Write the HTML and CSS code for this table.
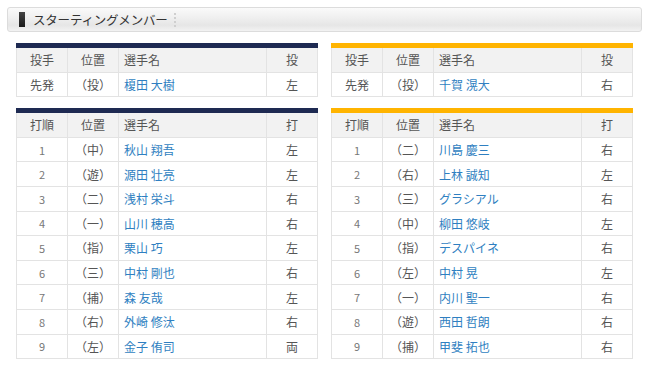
FILE: index.html
```html
<!DOCTYPE html>
<html lang="ja">
<head>
<meta charset="utf-8">
<link rel="stylesheet" href="styles.css">
</head>
<body>
<div class="page">
  <div class="title-bar">
    <span class="title-mark"></span>
    <span class="title-text">スターティングメンバー</span>
    <span class="title-sep"></span>
  </div>
  <div class="teams">
    <div class="team">
      <table class="lineup navy">
        <colgroup><col class="c-s"><col class="c-s"><col class="c-l"><col class="c-s"></colgroup>
        <tr class="head"><th>投手</th><th>位置</th><th class="name">選手名</th><th>投</th></tr>
        <tr><td>先発</td><td>（投）</td><td class="name"><a>榎田 大樹</a></td><td>左</td></tr>
      </table>
      <table class="lineup navy">
        <colgroup><col class="c-s"><col class="c-s"><col class="c-l"><col class="c-s"></colgroup>
        <tr class="head"><th>打順</th><th>位置</th><th class="name">選手名</th><th>打</th></tr>
        <tr><td class="num">1</td><td>（中）</td><td class="name"><a>秋山 翔吾</a></td><td>左</td></tr>
        <tr><td class="num">2</td><td>（遊）</td><td class="name"><a>源田 壮亮</a></td><td>左</td></tr>
        <tr><td class="num">3</td><td>（二）</td><td class="name"><a>浅村 栄斗</a></td><td>右</td></tr>
        <tr><td class="num">4</td><td>（一）</td><td class="name"><a>山川 穂高</a></td><td>右</td></tr>
        <tr><td class="num">5</td><td>（指）</td><td class="name"><a>栗山 巧</a></td><td>左</td></tr>
        <tr><td class="num">6</td><td>（三）</td><td class="name"><a>中村 剛也</a></td><td>右</td></tr>
        <tr><td class="num">7</td><td>（捕）</td><td class="name"><a>森 友哉</a></td><td>左</td></tr>
        <tr><td class="num">8</td><td>（右）</td><td class="name"><a>外崎 修汰</a></td><td>右</td></tr>
        <tr><td class="num">9</td><td>（左）</td><td class="name"><a>金子 侑司</a></td><td>両</td></tr>
      </table>
    </div>
    <div class="team">
      <table class="lineup orange">
        <colgroup><col class="c-s"><col class="c-s"><col class="c-l"><col class="c-s"></colgroup>
        <tr class="head"><th>投手</th><th>位置</th><th class="name">選手名</th><th>投</th></tr>
        <tr><td>先発</td><td>（投）</td><td class="name"><a>千賀 滉大</a></td><td>右</td></tr>
      </table>
      <table class="lineup orange">
        <colgroup><col class="c-s"><col class="c-s"><col class="c-l"><col class="c-s"></colgroup>
        <tr class="head"><th>打順</th><th>位置</th><th class="name">選手名</th><th>打</th></tr>
        <tr><td class="num">1</td><td>（二）</td><td class="name"><a>川島 慶三</a></td><td>右</td></tr>
        <tr><td class="num">2</td><td>（右）</td><td class="name"><a>上林 誠知</a></td><td>左</td></tr>
        <tr><td class="num">3</td><td>（三）</td><td class="name"><a>グラシアル</a></td><td>右</td></tr>
        <tr><td class="num">4</td><td>（中）</td><td class="name"><a>柳田 悠岐</a></td><td>左</td></tr>
        <tr><td class="num">5</td><td>（指）</td><td class="name"><a>デスパイネ</a></td><td>右</td></tr>
        <tr><td class="num">6</td><td>（左）</td><td class="name"><a>中村 晃</a></td><td>左</td></tr>
        <tr><td class="num">7</td><td>（一）</td><td class="name"><a>内川 聖一</a></td><td>右</td></tr>
        <tr><td class="num">8</td><td>（遊）</td><td class="name"><a>西田 哲朗</a></td><td>右</td></tr>
        <tr><td class="num">9</td><td>（捕）</td><td class="name"><a>甲斐 拓也</a></td><td>右</td></tr>
      </table>
    </div>
  </div>
</div>
</body>
</html>
```

FILE: styles.css
```css
html, body {
  margin: 0;
  padding: 0;
  background: #ffffff;
}
body {
  font-family: "Noto Sans CJK JP", "Noto Sans", sans-serif;
  font-size: 12px;
  color: #555555;
}
.page {
  padding: 7px 8px 0 7px;
}
.title-bar {
  height: 23px;
  border: 1px solid #dcdcdc;
  border-radius: 3px;
  background: linear-gradient(to bottom, #fafafa 0%, #f0f0f0 40%, #e6e6e6 75%, #f2f2f2 100%);
  display: flex;
  align-items: center;
  padding-left: 11px;
}
.title-mark {
  width: 6px;
  height: 15px;
  background: linear-gradient(to bottom, #444444, #1a1a1a);
  margin-right: 8px;
}
.title-text {
  font-size: 12.5px;
  color: #333333;
  letter-spacing: -0.2px;
}
.title-sep {
  width: 0;
  height: 14px;
  border-left: 2px dotted #cfcfcf;
  margin-left: 6px;
}
.teams {
  display: flex;
  gap: 14px;
  padding: 11px 10px 0 9px;
}
.team {
  width: 301px;
  display: flex;
  flex-direction: column;
  gap: 11px;
}
.lineup {
  width: 301px;
  border-collapse: collapse;
  table-layout: fixed;
}
.lineup .c-s { width: 51px; }
.lineup .c-l { width: 148px; }
.lineup.navy { border-top: 5px solid #1e2a52; }
.lineup.orange { border-top: 5px solid #ffb400; }
.lineup th, .lineup td {
  border: 1px solid #e3e3e3;
  padding: 0;
  height: 23.6px;
  text-align: center;
  font-weight: normal;
}
.lineup .head th {
  background: #f2f2f2;
  color: #555555;
  border-top: none;
}
.lineup td { color: #555555; }
.lineup td.num { color: #777777; font-size: 11px; }
.lineup .name {
  text-align: left;
  padding-left: 5px;
}
.lineup a {
  color: #2f7fc1;
  text-decoration: none;
}
```
